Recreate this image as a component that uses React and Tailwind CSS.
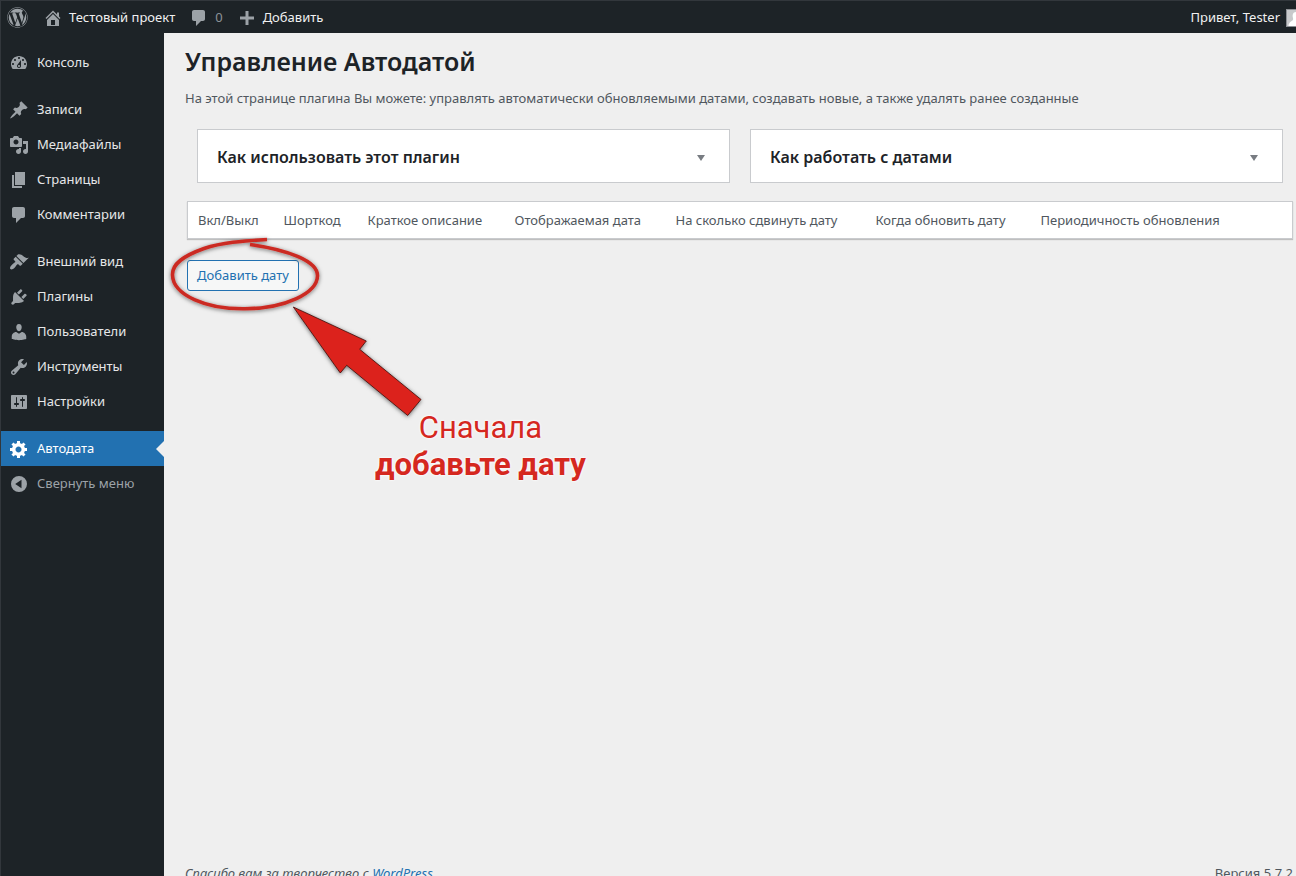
import { FaWordpress } from "react-icons/fa";

const icons = {
  home: "M16 8.5l1.53 1.53-1.06 1.06L10 4.6l-6.47 6.49-1.06-1.06L10 2.5l4 4v-2h2v4zm-6-2.46l6 5.99V18H4v-5.97zM12 17v-5H8v5h4z",
  comments: "M5 2h9c1.1 0 2 .9 2 2v7c0 1.1-.9 2-2 2h-2l-5 5v-5H5c-1.1 0-2-.9-2-2V4c0-1.1.9-2 2-2z",
  plus: "M17 8.5v3h-5.5V17h-3v-5.5H3v-3h5.500V3h3v5.500z",
  dashboard:
    "M3.76 16h12.48c1.1-1.37 1.76-3.11 1.76-5 0-4.42-3.58-8-8-8s-8 3.58-8 8c0 1.89.66 3.63 1.76 5zM10 4c.55 0 1 .45 1 1s-.45 1-1 1-1-.45-1-1 .45-1 1-1zM6 6c.55 0 1 .45 1 1s-.45 1-1 1-1-.45-1-1 .45-1 1-1zm8 0c.55 0 1 .45 1 1s-.45 1-1 1-1-.45-1-1 .45-1 1-1zm-5.370 5.550L12 7v6c0 1.100-.9 2-2 2s-2-.9-2-2c0-.57.24-1.080.63-1.450zM4 10c.55 0 1 .45 1 1s-.45 1-1 1-1-.45-1-1 .45-1 1-1zm12 0c.55 0 1 .45 1 1s-.45 1-1 1-1-.45-1-1 .45-1 1-1zm-5 3c0-.55-.45-1-1-1s-1 .45-1 1 .45 1 1 1 1-.45 1-1z",
  post: "M10.44 3.02l1.820-1.820 6.360 6.350-1.830 1.820c-1.050-.68-2.480-.57-3.410.36l-.75.75c-.92.93-1.040 2.350-.35 3.410l-1.830 1.820-2.410-2.410-2.800 2.790c-.42.42-3.380 2.710-3.800 2.290s1.860-3.390 2.280-3.810l2.790-2.790L4.100 9.360l1.830-1.820c1.050.69 2.480.57 3.400-.36l.75-.75c.93-.92 1.050-2.350.36-3.410z",
  media:
    "M13 11V4c0-.55-.45-1-1-1h-1.670L9 1H5L3.670 3H2c-.55 0-1 .45-1 1v7c0 .55.45 1 1 1h10c.55 0 1-.45 1-1zM7 4.500c1.380 0 2.500 1.120 2.500 2.500S8.380 9.500 7 9.500 4.500 8.380 4.500 7 5.620 4.500 7 4.500zM14 6h5v10.500c0 1.380-1.120 2.500-2.500 2.500S14 17.880 14 16.500s1.120-2.500 2.500-2.500c.17 0 .34.02.5.05V9h-3V6zm-4 8.050V13h2v3.500c0 1.380-1.120 2.500-2.500 2.500S7 17.880 7 16.500 8.120 14 9.500 14c.17 0 .34.02.5.05z",
  page: "M6 15V2h10v13H6zm-1 1h8v2H3V5h2v11z",
  appearance:
    "M14.480 11.060L7.410 3.990l1.500-1.500c.5-.56 2.300-.47 3.510.32 1.210.8 1.430 1.280 2.910 2.100 1.180.64 2.450 1.260 4.450.85zm-.71.71L6.700 4.700 4.930 6.470c-.39.39-.39 1.020 0 1.410l1.060 1.060c.39.39.39 1.030 0 1.420-.6.6-1.430 1.110-2.210 1.690-.35.26-.7.53-1.010.84C1.430 14.230.4 16.080 1.400 17.070c.99 1 2.840-.03 4.180-1.360.31-.31.58-.66.85-1.020.57-.78 1.080-1.610 1.690-2.210.39-.39 1.020-.39 1.410 0l1.060 1.060c.39.39 1.020.39 1.410 0z",
  plugins:
    "M13.110 4.360L9.870 7.600 8 5.730l3.240-3.240c.35-.34 1.050-.2 1.560.32.52.51.66 1.210.31 1.550zm-8 1.770l.91-1.120 9.010 9.010-1.190.84c-.71.71-2.630 1.160-3.820 1.160H6.140L4.900 17.260c-.59.59-1.540.59-2.120 0-.59-.58-.59-1.530 0-2.120l1.240-1.240v-3.880c0-1.130.4-3.190 1.090-3.890zm7.260 3.970l3.240-3.240c.34-.35 1.040-.21 1.550.31.52.51.66 1.210.31 1.550l-3.240 3.250z",
  users:
    "M10 9.250c-2.270 0-2.730-3.440-2.730-3.440C7 4.020 7.820 2 9.970 2c2.160 0 2.980 2.020 2.710 3.810 0 0-.41 3.440-2.680 3.440zm0 2.570L12.720 10c2.390 0 4.520 2.330 4.520 4.530v2.490s-3.650 1.130-7.240 1.130c-3.650 0-7.240-1.130-7.240-1.130v-2.490c0-2.250 1.940-4.480 4.470-4.480z",
  tools:
    "M16.680 9.770c-1.340 1.340-3.300 1.670-4.950.99l-5.410 6.520c-.99.99-2.590.99-3.580 0s-.99-2.590 0-3.570l6.520-5.420c-.68-1.650-.35-3.610.99-4.950 1.280-1.280 3.120-1.620 4.720-1.060l-2.890 2.890 2.820 2.820 2.860-2.870c.53 1.580.18 3.390-1.080 4.650zM3.810 16.210c.4.39 1.040.39 1.430 0 .4-.4.4-1.040 0-1.430-.39-.4-1.030-.4-1.430 0-.39.39-.39 1.030 0 1.430z",
  settings:
    "M18 16V4c0-.55-.45-1-1-1H3c-.55 0-1 .45-1 1v12c0 .55.45 1 1 1h14c.55 0 1-.45 1-1zM8 11h1c.55 0 1 .45 1 1s-.45 1-1 1H8v1.500c0 .28-.22.5-.5.5s-.5-.22-.5-.5V13H6c-.55 0-1-.45-1-1s.45-1 1-1h1V5.500c0-.28.22-.5.5-.5s.5.22.5.5V11zm5-2h-1c-.55 0-1-.45-1-1s.45-1 1-1h1V5.500c0-.28.22-.5.5-.5s.5.22.5.5V7h1c.55 0 1 .45 1 1s-.45 1-1 1h-1v5.500c0 .28-.22.5-.5.5s-.5-.22-.5-.5V9z",
  generic:
    "M18 12h-2.180c-.17.7-.44 1.350-.81 1.930l1.540 1.540-2.100 2.100-1.540-1.540c-.58.36-1.230.63-1.910.79V19H8v-2.180c-.68-.16-1.330-.43-1.910-.79l-1.540 1.540-2.120-2.120 1.540-1.540c-.36-.58-.63-1.230-.79-1.910H1V9.030h2.170c.16-.7.44-1.350.8-1.940L2.430 5.550l2.100-2.100 1.540 1.540c.58-.37 1.240-.64 1.930-.81V2h3v2.180c.68.16 1.330.43 1.910.79l1.540-1.540 2.120 2.120-1.540 1.540c.36.59.64 1.240.8 1.940H18V12zm-8.500 1.500c1.660 0 3-1.340 3-3s-1.340-3-3-3-3 1.340-3 3 1.340 3 3 3z",
  collapse: "M10 2a8 8 0 1 0 0 16 8 8 0 0 0 0-16zm2.500 3.800v8.400L6.200 10z",
};

function Icon({ name, className = "size-5" }) {
  return (
    <svg viewBox="0 0 20 20" className={`shrink-0 ${className}`} fill="currentColor" fillRule="evenodd" aria-hidden="true">
      <path d={icons[name]} />
    </svg>
  );
}

const groups = [
  [["dashboard", "Консоль"]],
  [
    ["post", "Записи"],
    ["media", "Медиафайлы"],
    ["page", "Страницы"],
    ["comments", "Комментарии"],
  ],
  [
    ["appearance", "Внешний вид"],
    ["plugins", "Плагины"],
    ["users", "Пользователи"],
    ["tools", "Инструменты"],
    ["settings", "Настройки"],
  ],
];

function Sidebar() {
  return (
    <nav className="flex w-[163px] shrink-0 flex-col gap-3 bg-[#1d2327] pt-3 text-[13px] text-[#e6e7e8]">
      {groups.map((items, i) => (
        <ul key={i}>
          {items.map(([icon, label]) => (
            <li key={label}>
              <a href="#" className="flex h-[35px] items-center gap-2 pl-2">
                <Icon name={icon} className="size-5 text-[#9ca2a7]" />
                {label}
              </a>
            </li>
          ))}
        </ul>
      ))}
      <div>
        <a href="#" aria-current="page" className="relative flex h-[35px] items-center gap-2 bg-[#2271b1] pl-2 text-white">
          <Icon name="generic" />
          Автодата
          <span className="absolute top-1/2 right-0 -translate-y-1/2 border-y-8 border-r-8 border-y-transparent border-r-[#efefef]" />
        </a>
        <button type="button" className="flex h-[35px] items-center gap-2 pl-2 text-[#9ca2a7]">
          <Icon name="collapse" />
          Свернуть меню
        </button>
      </div>
    </nav>
  );
}

function TopBar() {
  return (
    <header className="flex h-8 shrink-0 items-center bg-[#1d2327] pt-px pl-[6px] text-[13px] text-[#f0f0f1]">
      <a href="#" aria-label="О WordPress" className="mr-[15px] text-[#9ca2a7]">
        <FaWordpress className="size-[21px]" />
      </a>
      <a href="#" className="mr-[14px] flex items-center gap-[6px]">
        <Icon name="home" className="size-5 text-[#9ca2a7]" />
        Тестовый проект
      </a>
      <a href="#" className="mr-[14px] flex items-center gap-[6px] text-[#8c9297]">
        <Icon name="comments" className="size-5 text-[#9ca2a7]" />0
      </a>
      <a href="#" className="flex items-center gap-[6px]">
        <Icon name="plus" className="size-5 text-[#9ca2a7]" />
        Добавить
      </a>
      <a href="#" className="ml-auto flex items-center gap-[6px]">
        Привет, Tester
        <svg viewBox="0 0 10 18" className="h-[18px] w-[10px]" aria-hidden="true">
          <path d="M0 0h10v18H0z" fill="#8c8f94" />
          <path d="M1 1h9v16H1z" fill="#c8c9cb" />
          <path d="M10 3C7 3 6 6 7 9c.6 2-.5 2.500-2 3.500C3.500 13.500 2.500 15 2.500 17H10z" fill="#fff" />
        </svg>
      </a>
    </header>
  );
}

function Panel({ title }) {
  return (
    <button
      type="button"
      aria-expanded="false"
      className="flex h-[54px] items-center justify-between border border-[#c9cbce] bg-white pt-[2px] pr-6 pl-[19px] text-base font-semibold text-[#1d2327]"
    >
      {title}
      <svg viewBox="0 0 8 6" className="mt-[2px] h-[6px] w-2" aria-hidden="true">
        <path d="M0 0h8L4 6z" fill="#787c82" />
      </svg>
    </button>
  );
}

function DateTable() {
  return (
    <table className="mt-[18px] w-full table-fixed border border-[#c9cbce] bg-white text-left text-[13px] text-[#50575e] shadow-[0_1px_1px_rgba(0,0,0,0.2)]">
      <thead>
        <tr className="h-[37px] whitespace-nowrap [&>th]:pt-[2px] [&>th]:pl-[10px] [&>th]:font-normal">
          <th className="w-[86px]">Вкл/Выкл</th>
          <th className="w-[84px]">Шорткод</th>
          <th className="w-[147px]">Краткое описание</th>
          <th className="w-[161px]">Отображаемая дата</th>
          <th className="w-[200px]">На сколько сдвинуть дату</th>
          <th className="w-[165px]">Когда обновить дату</th>
          <th>Периодичность обновления</th>
        </tr>
      </thead>
    </table>
  );
}

function Callout() {
  return (
    <div className="pointer-events-none absolute -top-[30px] -left-[22px]">
      <svg viewBox="165 230 270 200" className="h-[200px] w-[270px]" aria-hidden="true">
        <defs>
          <filter id="soft" x="-20%" y="-20%" width="140%" height="140%">
            <feDropShadow dx="0" dy="1" stdDeviation="2" floodColor="#000" floodOpacity="0.55" />
          </filter>
        </defs>
        <g filter="url(#soft)">
          <path
            d="M267 239.500C242 241 222 242.500 204 248.500C183 256 172 264 172.500 275C173 295 206 309.300 245 308.800C286 308.300 317 293 317.500 276C318 261 288 250 250 244.500"
            fill="none"
            stroke="#cb2a23"
            strokeWidth="3.600"
          />
          <path
            d="M293.300 307L366.300 341L359.700 349.300L421 399.500L407.700 415.500L346.700 365.300L340.300 373Z"
            fill="#dc241b"
            stroke="#3b0f0c"
            strokeWidth="0.8"
          />
        </g>
      </svg>
      <p className="-mt-[21px] ml-[210px] w-max text-center font-['Roboto',sans-serif] text-[31px] leading-[37px] text-[#d5281f] [text-shadow:0_0_2px_#fff,0_0_3px_#fff]">
        <span className="block font-normal">Сначала</span>
        <strong className="block font-bold">добавьте дату</strong>
      </p>
    </div>
  );
}

export default function App() {
  return (
    <div className="flex h-screen flex-col overflow-hidden border-t border-l border-[#32373c] bg-[#efefef] font-['Noto_Sans',sans-serif]">
      <TopBar />
      <div className="flex min-h-0 flex-1">
        <Sidebar />
        <div className="flex min-w-0 flex-1 flex-col pr-[3px] pl-[21px]">
          <main className="flex-1">
            <h1 className="pt-3 text-[25px] leading-8 font-semibold text-[#1d2327]">Управление Автодатой</h1>
            <p className="mt-3 text-[13px] leading-[18px] text-[#50575e]">
              На этой странице плагина Вы можете: управлять автоматически обновляемыми датами, создавать новые, а также
              удалять ранее созданные
            </p>
            <div className="pl-[2px]">
              <div className="mt-[22px] grid grid-cols-2 gap-5 px-[10px]">
                <Panel title="Как использовать этот плагин" />
                <Panel title="Как работать с датами" />
              </div>
              <DateTable />
              <div className="relative mt-[21px] w-fit">
                <button
                  type="button"
                  className="h-[31px] w-28 rounded-[3px] border border-[#2271b1] bg-[#f6f7f7] text-[13px] text-[#2271b1]"
                >
                  Добавить дату
                </button>
                <Callout />
              </div>
            </div>
          </main>
          <footer className="flex h-3 shrink-0 justify-between text-[13px] leading-[18px] text-[#50575e]">
            <p className="italic">
              Спасибо вам за творчество с{" "}
              <a href="#" className="text-[#2271b1] underline">
                WordPress
              </a>
            </p>
            <p>Версия 5.7.2</p>
          </footer>
        </div>
      </div>
    </div>
  );
}
